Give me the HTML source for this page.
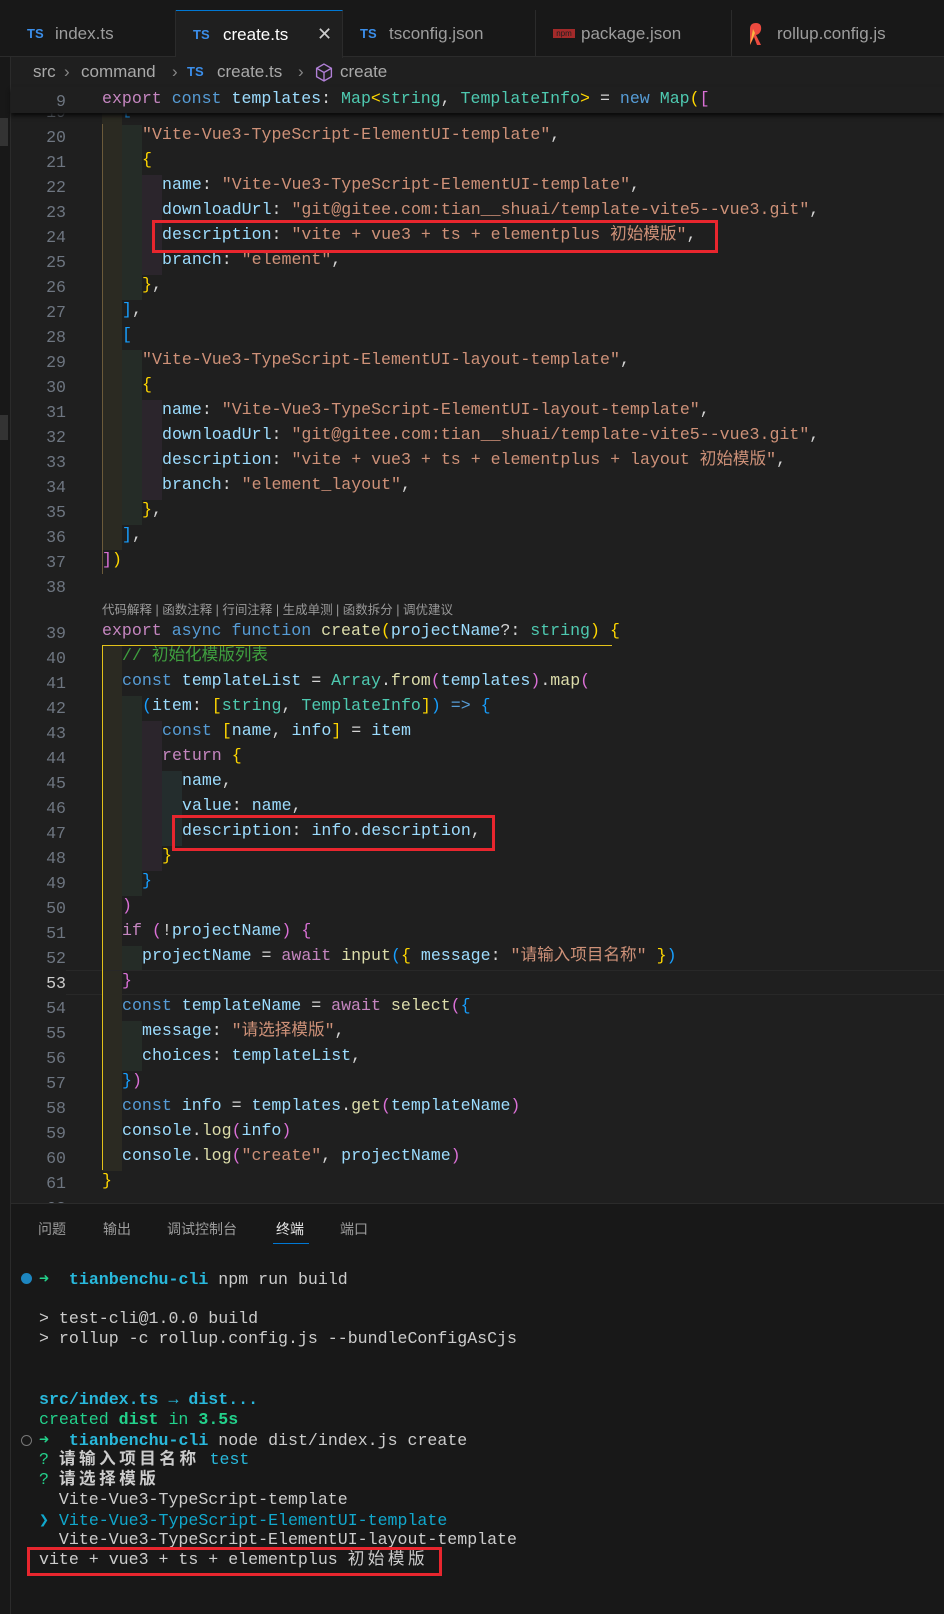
<!DOCTYPE html>
<html><head><meta charset="utf-8"><style>
*{margin:0;padding:0;box-sizing:border-box}
body{width:944px;height:1614px;background:#1f1f1f;position:relative;overflow:hidden;font-family:"Liberation Sans","Noto Sans CJK SC",sans-serif;color:#ccc}
.abs{position:absolute}
.tabs{left:0;top:0;width:944px;height:57px;background:#181818;border-bottom:1px solid #2b2b2b}
.tab{position:absolute;top:10px;height:47px;border-right:1px solid #2b2b2b;font-size:17px;color:#9d9d9d;line-height:47px;white-space:nowrap}
.tab .ic{position:absolute;top:0;line-height:47px;font:bold 13px/47px "Liberation Sans",sans-serif;color:#3b8eea}
.tab .tx{position:absolute;top:0}
.bc{position:absolute;top:57px;height:30px;line-height:30px;font-size:17px;color:#a9a9a9;white-space:pre}
.ln{position:absolute;left:11px;width:55px;text-align:right;font:16.6px "Liberation Mono",monospace;color:#6e7681;height:25px;line-height:25px}
.cl{position:absolute;left:102px;height:25px;line-height:25px;font:16.6px "Liberation Mono",monospace;white-space:pre;color:#d4d4d4;padding-right:4px}
.z{line-height:0;font-family:"Liberation Mono","Noto Sans CJK SC",monospace}
.i1{padding-left:20px;background:linear-gradient(to right,#2b2a22 0 20px,transparent 20px)}
.i2{padding-left:40px;background:linear-gradient(to right,#2b2a22 0 20px,#252c27 20px 40px,transparent 40px)}
.i3{padding-left:60px;background:linear-gradient(to right,#2b2a22 0 20px,#252c27 20px 40px,#2b252c 40px 60px,transparent 60px)}
.i4{padding-left:80px;background:linear-gradient(to right,#2b2a22 0 20px,#252c27 20px 40px,#2b252c 40px 60px,#242d2d 60px 80px,transparent 80px)}
.k{color:#c586c0}.b{color:#569cd6}.v{color:#9cdcfe}.t{color:#4ec9b0}.s{color:#ce9178}.f{color:#dcdcaa}.y{color:#ffd700}.p{color:#da70d6}.c{color:#179fff}.cm{color:#3fa03f}
.term{left:11px;top:1203px;width:933px;height:411px;background:#181818;border-top:1px solid #2b2b2b}
.tl{position:absolute;left:39px;height:20px;line-height:20px;font:16.6px "Liberation Mono",monospace;white-space:pre;color:#ccc}
.cj{letter-spacing:3.5px;font-weight:bold}
.red{position:absolute;border:3px solid #e8262e}
</style></head><body>
<div class="abs" style="left:0;top:0;width:11px;height:1614px;background:#181818;border-right:1px solid #2b2b2b"></div>
<div class="abs" style="left:0;top:118px;width:8px;height:28px;background:#333"></div>
<div class="abs" style="left:0;top:415px;width:8px;height:25px;background:#333"></div>
<div class="abs tabs"></div>
<div class="tab" style="left:11px;width:165px"><span class="ic" style="left:16px">TS</span><span class="tx" style="left:44px">index.ts</span></div>
<div class="tab" style="left:176px;width:167px;background:#1f1f1f;border-top:1px solid #0078d4;color:#fff;height:48px"><span class="ic" style="left:17px">TS</span><span class="tx" style="left:47px">create.ts</span><span class="tx" style="left:141px;font-size:18px;color:#ccc">✕</span></div>
<div class="tab" style="left:343px;width:193px"><span class="ic" style="left:17px">TS</span><span class="tx" style="left:46px">tsconfig.json</span></div>
<div class="tab" style="left:536px;width:196px"><span style="position:absolute;left:17px;top:19px;width:22px;height:9px;background:#a32a2a;display:block;line-height:9px;font-size:8px;color:#1f1f1f;text-align:center">npm</span><span class="tx" style="left:45px">package.json</span></div>
<div class="tab" style="left:732px;width:212px;border-right:0"><svg style="position:absolute;left:16px;top:13px" width="14" height="22" viewBox="0 0 14 22"><path d="M2 22 L2 6 Q2 0 8 0 Q14 0 13 7 Q12 11 8 12 L13 22 L9 22 L6 14 Z" fill="#ec4a3f"/><path d="M2 22 L7 10 L5 6 Z" fill="#f8b640"/></svg><span class="tx" style="left:45px">rollup.config.js</span></div>
<div class="bc" style="left:33px">src</div>
<div class="bc" style="left:64px;color:#888">›</div>
<div class="bc" style="left:81px">command</div>
<div class="bc" style="left:172px;color:#888">›</div>
<div class="bc" style="left:187px;color:#3b8eea;font:bold 13px/30px 'Liberation Sans',sans-serif">TS</div>
<div class="bc" style="left:217px">create.ts</div>
<div class="bc" style="left:298px;color:#888">›</div>
<svg style="position:absolute;left:315px;top:63px" width="18" height="19" viewBox="0 0 16 18"><path d="M8 1 L15 5 L15 13 L8 17 L1 13 L1 5 Z M1 5 L8 9 L15 5 M8 9 L8 17" fill="none" stroke="#b180d7" stroke-width="1.3"/></svg>
<div class="bc" style="left:340px">create</div>

<div class="ln" style="top:99.5px">19</div>
<div class="cl i1" style="top:99.5px"><span class="c">[</span></div>
<div class="abs" style="left:11px;top:87px;width:933px;height:26px;background:#1f1f1f;box-shadow:0 3px 4px #0b0b0b"></div>
<div class="ln" style="top:89px">9</div>
<div class="cl" style="top:89px"><span class="k">export</span> <span class="b">const</span> <span class="v">templates</span>: <span class="t">Map</span><span class="y">&lt;</span><span class="t">string</span>, <span class="t">TemplateInfo</span><span class="y">&gt;</span> = <span class="b">new</span> <span class="t">Map</span><span class="y">(</span><span class="p">[</span></div>

<div class="ln" style="top:124.5px">20</div><div class="cl i2" style="top:124.5px"><span class="s">"Vite-Vue3-TypeScript-ElementUI-template"</span>,</div>
<div class="ln" style="top:149.5px">21</div><div class="cl i2" style="top:149.5px"><span class="y">{</span></div>
<div class="ln" style="top:174.5px">22</div><div class="cl i3" style="top:174.5px"><span class="v">name</span>: <span class="s">"Vite-Vue3-TypeScript-ElementUI-template"</span>,</div>
<div class="ln" style="top:199.5px">23</div><div class="cl i3" style="top:199.5px"><span class="v">downloadUrl</span>: <span class="s">"git@gitee.com:tian__shuai/template-vite5--vue3.git"</span>,</div>
<div class="ln" style="top:224.5px">24</div><div class="cl i3" style="top:224.5px"><span class="v">description</span>: <span class="s">"vite + vue3 + ts + elementplus <span class="z">初始模版</span>"</span>,</div>
<div class="ln" style="top:249.5px">25</div><div class="cl i3" style="top:249.5px"><span class="v">branch</span>: <span class="s">"element"</span>,</div>
<div class="ln" style="top:274.5px">26</div><div class="cl i2" style="top:274.5px"><span class="y">}</span>,</div>
<div class="ln" style="top:299.5px">27</div><div class="cl i1" style="top:299.5px"><span class="c">]</span>,</div>
<div class="ln" style="top:324.5px">28</div><div class="cl i1" style="top:324.5px"><span class="c">[</span></div>
<div class="ln" style="top:349.5px">29</div><div class="cl i2" style="top:349.5px"><span class="s">"Vite-Vue3-TypeScript-ElementUI-layout-template"</span>,</div>
<div class="ln" style="top:374.5px">30</div><div class="cl i2" style="top:374.5px"><span class="y">{</span></div>
<div class="ln" style="top:399.5px">31</div><div class="cl i3" style="top:399.5px"><span class="v">name</span>: <span class="s">"Vite-Vue3-TypeScript-ElementUI-layout-template"</span>,</div>
<div class="ln" style="top:424.5px">32</div><div class="cl i3" style="top:424.5px"><span class="v">downloadUrl</span>: <span class="s">"git@gitee.com:tian__shuai/template-vite5--vue3.git"</span>,</div>
<div class="ln" style="top:449.5px">33</div><div class="cl i3" style="top:449.5px"><span class="v">description</span>: <span class="s">"vite + vue3 + ts + elementplus + layout <span class="z">初始模版</span>"</span>,</div>
<div class="ln" style="top:474.5px">34</div><div class="cl i3" style="top:474.5px"><span class="v">branch</span>: <span class="s">"element_layout"</span>,</div>
<div class="ln" style="top:499.5px">35</div><div class="cl i2" style="top:499.5px"><span class="y">}</span>,</div>
<div class="ln" style="top:524.5px">36</div><div class="cl i1" style="top:524.5px"><span class="c">]</span>,</div>
<div class="ln" style="top:549.5px">37</div><div class="cl" style="top:549.5px"><span class="p">]</span><span class="y">)</span></div>
<div class="ln" style="top:574.5px">38</div>
<div class="abs" style="left:102px;top:600px;font-size:12.5px;color:#999;line-height:20px;white-space:pre">代码解释 | 函数注释 | 行间注释 | 生成单测 | 函数拆分 | 调优建议</div>
<div class="ln" style="top:620.5px">39</div><div class="cl" style="top:620.5px"><span class="k">export</span> <span class="b">async</span> <span class="b">function</span> <span class="f">create</span><span class="y">(</span><span class="v">projectName</span>?: <span class="t">string</span><span class="y">)</span> <span class="y">{</span></div>
<div class="ln" style="top:645.5px">40</div><div class="cl i1" style="top:645.5px"><span class="cm">// <span class="z">初始化模版列表</span></span></div>
<div class="ln" style="top:670.5px">41</div><div class="cl i1" style="top:670.5px"><span class="b">const</span> <span class="v">templateList</span> = <span class="t">Array</span>.<span class="f">from</span><span class="p">(</span><span class="v">templates</span><span class="p">)</span>.<span class="f">map</span><span class="p">(</span></div>
<div class="ln" style="top:695.5px">42</div><div class="cl i2" style="top:695.5px"><span class="c">(</span><span class="v">item</span>: <span class="y">[</span><span class="t">string</span>, <span class="t">TemplateInfo</span><span class="y">]</span><span class="c">)</span> <span class="b">=&gt;</span> <span class="c">{</span></div>
<div class="ln" style="top:720.5px">43</div><div class="cl i3" style="top:720.5px"><span class="b">const</span> <span class="y">[</span><span class="v">name</span>, <span class="v">info</span><span class="y">]</span> = <span class="v">item</span></div>
<div class="ln" style="top:745.5px">44</div><div class="cl i3" style="top:745.5px"><span class="k">return</span> <span class="y">{</span></div>
<div class="ln" style="top:770.5px">45</div><div class="cl i4" style="top:770.5px"><span class="v">name</span>,</div>
<div class="ln" style="top:795.5px">46</div><div class="cl i4" style="top:795.5px"><span class="v">value</span>: <span class="v">name</span>,</div>
<div class="ln" style="top:820.5px">47</div><div class="cl i4" style="top:820.5px"><span class="v">description</span>: <span class="v">info</span>.<span class="v">description</span>,</div>
<div class="ln" style="top:845.5px">48</div><div class="cl i3" style="top:845.5px"><span class="y">}</span></div>
<div class="ln" style="top:870.5px">49</div><div class="cl i2" style="top:870.5px"><span class="c">}</span></div>
<div class="ln" style="top:895.5px">50</div><div class="cl i1" style="top:895.5px"><span class="p">)</span></div>
<div class="ln" style="top:920.5px">51</div><div class="cl i1" style="top:920.5px"><span class="k">if</span> <span class="p">(</span>!<span class="v">projectName</span><span class="p">)</span> <span class="p">{</span></div>
<div class="ln" style="top:945.5px">52</div><div class="cl i2" style="top:945.5px"><span class="v">projectName</span> = <span class="k">await</span> <span class="f">input</span><span class="c">(</span><span class="y">{</span> <span class="v">message</span>: <span class="s">"<span class="z">请输入项目名称</span>"</span> <span class="y">}</span><span class="c">)</span></div>
<div class="abs" style="left:66px;top:970px;width:878px;height:25px;border-top:1px solid #282828;border-bottom:1px solid #282828"></div>
<div class="ln" style="top:970.5px;color:#ccc">53</div><div class="cl i1" style="top:970.5px"><span class="p">}</span></div>
<div class="ln" style="top:995.5px">54</div><div class="cl i1" style="top:995.5px"><span class="b">const</span> <span class="v">templateName</span> = <span class="k">await</span> <span class="f">select</span><span class="p">(</span><span class="c">{</span></div>
<div class="ln" style="top:1020.5px">55</div><div class="cl i2" style="top:1020.5px"><span class="v">message</span>: <span class="s">"<span class="z">请选择模版</span>"</span>,</div>
<div class="ln" style="top:1045.5px">56</div><div class="cl i2" style="top:1045.5px"><span class="v">choices</span>: <span class="v">templateList</span>,</div>
<div class="ln" style="top:1070.5px">57</div><div class="cl i1" style="top:1070.5px"><span class="c">}</span><span class="p">)</span></div>
<div class="ln" style="top:1095.5px">58</div><div class="cl i1" style="top:1095.5px"><span class="b">const</span> <span class="v">info</span> = <span class="v">templates</span>.<span class="f">get</span><span class="p">(</span><span class="v">templateName</span><span class="p">)</span></div>
<div class="ln" style="top:1120.5px">59</div><div class="cl i1" style="top:1120.5px"><span class="v">console</span>.<span class="f">log</span><span class="p">(</span><span class="v">info</span><span class="p">)</span></div>
<div class="ln" style="top:1145.5px">60</div><div class="cl i1" style="top:1145.5px"><span class="v">console</span>.<span class="f">log</span><span class="p">(</span><span class="s">"create"</span>, <span class="v">projectName</span><span class="p">)</span></div>
<div class="ln" style="top:1170.5px">61</div><div class="cl" style="top:1170.5px"><span class="y">}</span></div>
<div class="ln" style="top:1195.5px">62</div>
<div class="abs" style="left:102px;top:645px;width:510px;height:1px;background:#e3c21a"></div>
<div class="abs" style="left:102px;top:645px;width:1px;height:525px;background:#e3c21a"></div>
<div class="abs" style="left:102px;top:124px;width:1px;height:450px;background:#6b5a3a"></div>
<div class="red" style="left:152px;top:220px;width:566px;height:33px"></div>
<div class="red" style="left:172px;top:815px;width:323px;height:36px"></div>
<div class="abs term"></div>
<div class="abs" style="left:38px;top:1218px;font-size:14px;color:#9d9d9d;line-height:22px">问题</div>
<div class="abs" style="left:103px;top:1218px;font-size:14px;color:#9d9d9d;line-height:22px">输出</div>
<div class="abs" style="left:167px;top:1218px;font-size:14px;color:#9d9d9d;line-height:22px">调试控制台</div>
<div class="abs" style="left:276px;top:1218px;font-size:14px;color:#e7e7e7;line-height:22px">终端</div>
<div class="abs" style="left:273px;top:1243px;width:36px;height:1px;background:#0078d4"></div>
<div class="abs" style="left:340px;top:1218px;font-size:14px;color:#9d9d9d;line-height:22px">端口</div>
<div class="abs" style="left:21px;top:1273px;width:11px;height:11px;border-radius:50%;background:#1d86c0"></div>
<div class="tl" style="top:1269px"><span style="color:#23d18b">➜</span>  <b style="color:#29b8db">tianbenchu-cli</b> npm run build</div>
<div class="tl" style="top:1309px">&gt; test-cli@1.0.0 build</div>
<div class="tl" style="top:1329px">&gt; rollup -c rollup.config.js --bundleConfigAsCjs</div>
<div class="tl" style="top:1390px"><b style="color:#29b8db">src/index.ts → dist...</b></div>
<div class="tl" style="top:1410px"><span style="color:#23d18b">created <b>dist</b> in <b>3.5s</b></span></div>
<div class="abs" style="left:21px;top:1435px;width:11px;height:11px;border-radius:50%;border:1.5px solid #777"></div>
<div class="tl" style="top:1430px"><span style="color:#23d18b">➜</span>  <b style="color:#29b8db">tianbenchu-cli</b> node dist/index.js create</div>
<div class="tl" style="top:1450px"><span style="color:#23d18b">?</span> <span class="cj z">请输入项目名称</span> <span style="color:#29b8db">test</span></div>
<div class="tl" style="top:1470px"><span style="color:#23d18b">?</span> <span class="cj z">请选择模版</span></div>
<div class="tl" style="top:1490px">  Vite-Vue3-TypeScript-template</div>
<div class="tl" style="top:1510px;color:#11a8cd">❯ Vite-Vue3-TypeScript-ElementUI-template</div>
<div class="tl" style="top:1530px">  Vite-Vue3-TypeScript-ElementUI-layout-template</div>
<div class="tl" style="top:1550px">vite + vue3 + ts + elementplus <span class="z" style="letter-spacing:3.5px">初始模版</span></div>
<div class="red" style="left:27px;top:1547px;width:415px;height:29px"></div>
</body></html>
